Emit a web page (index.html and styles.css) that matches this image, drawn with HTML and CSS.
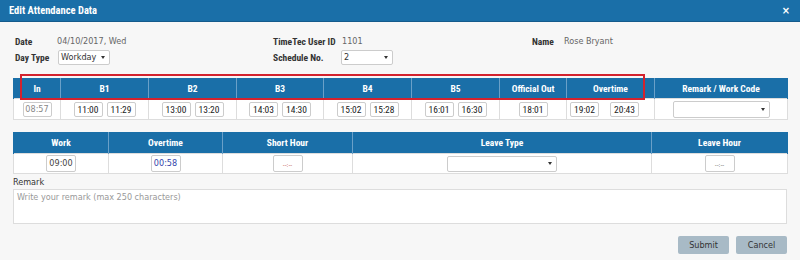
FILE: index.html
```html
<!DOCTYPE html>
<html>
<head>
<meta charset="utf-8">
<title>Edit Attendance Data</title>
<link rel="stylesheet" href="styles.css">
</head>
<body>

<div class="titlebar">
  <span class="title">Edit Attendance Data</span>
  <span class="close">&times;</span>
</div>

<div class="info">
  <span class="lbl">Date</span>
  <span class="val">04/10/2017, Wed</span>
  <span class="lbl">TimeTec User ID</span>
  <span class="val">1101</span>
  <span class="lbl">Name</span>
  <span class="val">Rose Bryant</span>

  <span class="lbl">Day Type</span>
  <span><span class="select daytype">Workday<i class="caret"></i></span></span>
  <span class="lbl">Schedule No.</span>
  <span><span class="select sched">2<i class="caret"></i></span></span>
  <span></span>
  <span></span>
</div>

<div class="grid-wrap">
<table class="grid times">
  <colgroup>
    <col style="width:47px"><col style="width:88px"><col style="width:88px"><col style="width:87px">
    <col style="width:88px"><col style="width:88px"><col style="width:67px"><col style="width:88px"><col style="width:133px">
  </colgroup>
  <tr>
    <th>In</th><th>B1</th><th>B2</th><th>B3</th><th>B4</th><th>B5</th><th>Official Out</th><th>Overtime</th><th>Remark / Work Code</th>
  </tr>
  <tr>
    <td><span class="box dim">08:57</span></td>
    <td><div class="pair"><span class="box">11:00</span><span class="box">11:29</span></div></td>
    <td><div class="pair"><span class="box">13:00</span><span class="box">13:20</span></div></td>
    <td><div class="pair"><span class="box">14:03</span><span class="box">14:30</span></div></td>
    <td><div class="pair"><span class="box">15:02</span><span class="box">15:28</span></div></td>
    <td><div class="pair"><span class="box">16:01</span><span class="box">16:30</span></div></td>
    <td><span class="box">18:01</span></td>
    <td><div class="pair wide"><span class="box">19:02</span><span class="box">20:43</span></div></td>
    <td><span class="select code"><i class="caret"></i></span></td>
  </tr>
</table>
<div class="highlight"></div>
</div>

<table class="grid totals">
  <colgroup>
    <col style="width:95px"><col style="width:114px"><col style="width:130px"><col style="width:299px"><col style="width:136px">
  </colgroup>
  <tr>
    <th>Work</th><th>Overtime</th><th>Short Hour</th><th>Leave Type</th><th>Leave Hour</th>
  </tr>
  <tr>
    <td><span class="box">09:00</span></td>
    <td><span class="box blue">00:58</span></td>
    <td><span class="box empty red">--:--</span></td>
    <td><span class="select leave"><i class="caret"></i></span></td>
    <td><span class="box empty">--:--</span></td>
  </tr>
</table>

<div class="remark">
  <div class="remark-label">Remark</div>
  <div class="textarea">Write your remark (max 250 characters)</div>
</div>

<div class="actions">
  <span class="btn">Submit</span>
  <span class="btn">Cancel</span>
</div>

</body>
</html>
```

FILE: styles.css
```css
body { margin: 0; background: #f7f7f7; font-family: "DejaVu Sans Condensed", "DejaVu Sans", sans-serif; font-size: 9px; color: #333; }

.titlebar { height: 22px; background: #1a6fa8; border-bottom: 1px solid #155b8c; box-sizing: border-box; display: flex; align-items: center; justify-content: space-between; padding: 0 10px 0 9px; color: #fff; }
.title { font-family: "Roboto Condensed", sans-serif; font-weight: bold; font-size: 10.5px; }
.close { font-weight: bold; font-size: 11px; }

.info { display: grid; grid-template-columns: 42px 216px 69px 190px 32px 1fr; grid-auto-rows: 16px; align-items: center; padding: 11px 0 0 15px; }
.lbl { font-family: "Roboto Condensed", sans-serif; font-weight: bold; font-size: 9.5px; color: #333; }
.val { color: #666; }

.select { display: inline-flex; align-items: center; justify-content: space-between; box-sizing: border-box; height: 15px; background: #fff; border: 1px solid #ccc; border-radius: 2px; padding: 0 4px 0 2px; color: #333; vertical-align: middle; }
.daytype { width: 52px; margin-left: 1px; }
.sched { width: 52px; margin-left: -1px; }
.code { width: 97px; height: 17px; }
.leave { width: 110px; height: 16px; }
.caret { display: inline-block; width: 0; height: 0; border-left: 2.5px solid transparent; border-right: 2.5px solid transparent; border-top: 3px solid #333; margin-left: auto; }

.grid-wrap { position: relative; margin: 13px 13px 0 13px; width: 774px; }
.grid { border-collapse: collapse; table-layout: fixed; width: 774px; background: #fff; }
.totals { margin: 12px 13px 0 13px; }
.grid th { background: #1a6fa8; color: #fff; font-family: "Roboto Condensed", sans-serif; font-weight: bold; font-size: 9.5px; height: 20px; padding: 0; border-left: 1px solid #6aa0c8; border-right: 1px solid #6aa0c8; text-align: center; }
.grid th:first-child { border-left-color: #1a6fa8; }
.grid th:last-child { border-right-color: #1a6fa8; }
.grid td { height: 20px; padding: 0; border: 1px solid #ddd; text-align: center; }
.totals th { height: 21px; }
.totals td { height: 19px; }

.highlight { position: absolute; left: 7px; top: -4px; width: 625px; height: 26px; border: 2px solid #d3222e; box-sizing: border-box; }

.pair { display: flex; justify-content: center; gap: 4px; }
.pair.wide { justify-content: flex-start; gap: 11px; padding-left: 3px; }
.box { display: inline-block; box-sizing: border-box; width: 29px; height: 15px; line-height: 13px; background: #fff; border: 1px solid #ccc; border-radius: 2px; color: #222; font-family: "Roboto Condensed", sans-serif; font-size: 9.5px; text-align: center; vertical-align: middle; }
.box.dim { color: #888; font-family: "DejaVu Sans Condensed", sans-serif; font-size: 9px; }
.totals .box { width: 30px; height: 17px; line-height: 15px; font-family: "DejaVu Sans Condensed", sans-serif; font-size: 9px; color: #444; }
.totals .box.blue { color: #3344aa; }
.totals .box.empty { color: #666; font-size: 6px; line-height: 18px; }
.totals .box.red { color: #c05050; }

.remark { margin: 0 13px; }
.remark-label { height: 15px; line-height: 17px; color: #333; }
.textarea { box-sizing: border-box; height: 35px; background: #fff; border: 1px solid #ddd; padding: 2px 3px; color: #999; }

.actions { display: flex; justify-content: flex-end; gap: 7px; margin: 12px 13px 0 0; }
.btn { display: inline-flex; align-items: center; justify-content: center; width: 51px; height: 18px; background: #a8bac6; border-radius: 2px; color: #333; }
```
